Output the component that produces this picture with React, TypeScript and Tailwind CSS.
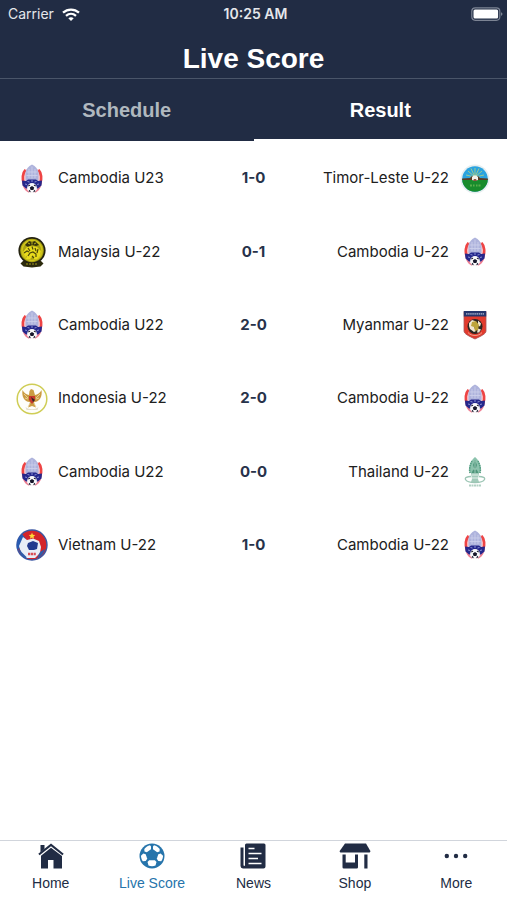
import type { ReactNode } from "react";

type Country =
  | "cambodia"
  | "timorLeste"
  | "malaysia"
  | "myanmar"
  | "indonesia"
  | "thailand"
  | "vietnam";

interface Team {
  name: string;
  country: Country;
}

interface Match {
  home: Team;
  away: Team;
  score: string;
}

const matches: Match[] = [
  {
    home: { name: "Cambodia U23", country: "cambodia" },
    away: { name: "Timor-Leste U-22", country: "timorLeste" },
    score: "1-0",
  },
  {
    home: { name: "Malaysia U-22", country: "malaysia" },
    away: { name: "Cambodia U-22", country: "cambodia" },
    score: "0-1",
  },
  {
    home: { name: "Cambodia U22", country: "cambodia" },
    away: { name: "Myanmar U-22", country: "myanmar" },
    score: "2-0",
  },
  {
    home: { name: "Indonesia U-22", country: "indonesia" },
    away: { name: "Cambodia U-22", country: "cambodia" },
    score: "2-0",
  },
  {
    home: { name: "Cambodia U22", country: "cambodia" },
    away: { name: "Thailand U-22", country: "thailand" },
    score: "0-0",
  },
  {
    home: { name: "Vietnam U-22", country: "vietnam" },
    away: { name: "Cambodia U-22", country: "cambodia" },
    score: "1-0",
  },
];

const crests: Record<Country, ReactNode> = {
  cambodia: (
    <>
      <path d="M9.500 6C5.500 9 5 17 6.500 22c1 4 5 7.800 9.500 7.800s8.500-3.800 9.500-7.800c1.500-5 1-13-3-16z" fill="#f9cdd2" />
      <path d="M9.500 7C6.500 10 6 16 8 21M22.500 7c3 3 3.500 9 1.500 14" fill="none" stroke="#ee4444" strokeWidth="2.600" />
      <path d="M8 23c1 3 3 5 5 5.800M24 23c-1 3-3 5-5 5.800" fill="none" stroke="#ee7f92" strokeWidth="1.800" />
      <path d="M16 1.500l2.500 1.500 2 2 2 4v8l-2.500 3h-8l-2.500-3V9l2-4 2-2z" fill="#aeb3dc" />
      <path d="M16 3.500v12M13 6v9M19 6v9M10.500 9h11M10.500 12.500h11" stroke="#ced2ec" strokeWidth=".8" />
      <path d="M6 17.500l4 .5 2-1.500h8l2 1.500 4-.5-.5 5-3.500 3H10l-3.500-3z" fill="#25288c" />
      <path d="M11.500 18.500l2 .5M18.500 19l2-.5M15 18h2M9 21l2 .5M21 21.500l2-.5" stroke="#8990d4" />
      <circle cx="16" cy="25" r="4.900" fill="#f8f8fa" />
      <path d="M16 23l2.200 1.600-.8 2.500h-2.800l-.8-2.500zM11.500 23.500l1.700-2 1.200 1.200zM20.500 23.500l-1.700-2-1.200 1.200zM12.300 28.300l1.500-1.500 1 2.400zM19.700 28.300l-1.500-1.500-1 2.400z" fill="#17172b" />
    </>
  ),
  timorLeste: (
    <>
      <circle cx="16" cy="16" r="14.500" fill="#e8eff0" />
      <circle cx="16" cy="16" r="12.800" fill="#2ba3df" />
      <path d="M3.200 16h25.600a12.800 12.800 0 0 1-25.600 0z" fill="#188c2c" />
      <path d="M16 14L9 8M16 14L12 5.500M16 14V5M16 14l4-8.500M16 14l7-6M16 14l-9-2M16 14l9-2" stroke="#a8cf83" strokeWidth=".9" />
      <path d="M3.200 15.500L11 15l2-2h6l2 2 7.800.5v1.500H3.200z" fill="#5a3c24" />
      <path d="M13 17v-3l1.500-1.500h3L19 14v3l-3 1z" fill="#f3f2ea" />
      <path d="M15 16h2l1 2h-4z" fill="#8a5642" />
      <path d="M11 22.500h2M14 22.500h1.500M17 22.500h1.500M19.500 22.500h2" stroke="#58ae4c" strokeWidth="2" />
    </>
  ),
  malaysia: (
    <>
      <path d="M7 25h18l2.500 2.500-3 3-8.500 1-8.500-1-3-3z" fill="#2c2a0c" />
      <circle cx="16" cy="14.500" r="13.600" fill="#24220f" />
      <circle cx="16" cy="14.500" r="11.800" fill="#aaa213" />
      <circle cx="16" cy="14.500" r="10" fill="none" stroke="#d0c51b" strokeWidth="1.500" />
      <path d="M9 9l4-4 3 1 3-1 4 4-3 1-4-1-4 2z" fill="#34310d" />
      <path d="M12 7l2 1M16 5.500v3M20 7l-2 1" stroke="#bbb11c" />
      <path d="M7 16l4-5 5-1 5 1 4 4-1 5-3 3h-3l-1-3-3 3h-4l1-3-2 1z" fill="#e8da1c" />
      <path d="M8 17l3-2 2 1M12 12l2 3M16 10.500l1 3M19 12l1 3M22 13l-1 4M12 20l2-3 3-1 3 2v3M16 20l2 2" fill="none" stroke="#4b460b" strokeWidth="1.200" />
      <path d="M10 28h12" stroke="#9f971d" strokeWidth="1.200" strokeDasharray="2 1" />
    </>
  ),
  myanmar: (
    <>
      <path d="M5 2.500h22V22c0 3-5 5-11 8-6-3-11-5-11-8z" fill="#e23b2d" stroke="#a5555b" strokeWidth=".8" />
      <path d="M4.800 2h22.400v5.500H4.800z" fill="#26376d" />
      <path d="M7 4.800h18" stroke="#8e97b8" strokeWidth="1.800" strokeDasharray="1.500 .6" />
      <circle cx="16" cy="17.500" r="7.500" fill="#2c2521" />
      <path d="M10 14l3-3 3 1 2 3-3 3 2 4-2 1-4-3-1-3zM19 11.500l3 3-1 3-2-1zM19 19.500l3 1-2 3h-2z" fill="#f0e5d1" />
      <path d="M13 13l4-1 3 4-1 5-3 1-1-4-3-1z" fill="#bda43b" />
      <path d="M9 23.500c3 4 11 4 14 0" fill="none" stroke="#f1a18c" />
    </>
  ),
  indonesia: (
    <>
      <circle cx="16" cy="16" r="14.800" fill="#fefefa" stroke="#cfcd55" strokeWidth="1.500" />
      <path d="M6.500 7c-1 6 1.500 12 7.500 12l-2 5.500 4-1.500 4 1.500-2-5.500c6 0 8.500-6 7.500-12-1.500 3-4 4.500-6.500 5L17.500 7 15 6l-1.500 2-.5 4C10.500 11.500 8 10 6.500 7z" fill="#cb9c43" />
      <path d="M8 11l4 4M9 15l3 1M24 11l-4 4M23 15l-3 1M14 20l-2 4M18 20l2 4" stroke="#ecd9a8" strokeWidth=".8" />
      <path d="M13 13h6v4l-3 4-3-4z" fill="#c6382e" />
      <path d="M15 14l4 3-2 2z" fill="#2b2825" />
      <path d="M9.500 24c4 3 9 3 13 0l-1 3h-11z" fill="#e6dfca" />
    </>
  ),
  thailand: (
    <>
      <path d="M16 1c-3 2-6 8-6 12l1 4h10l1-4c0-4-3-10-6-12z" fill="#8cc3ad" />
      <path d="M11 17c-1-3 0-8 2-12M21 17c1-3 0-8-2-12" fill="none" stroke="#529c80" strokeWidth="1.500" strokeDasharray="1.500 .7" />
      <path d="M16 4l2 5-1 3 3 6h-8l3-6-1-3z" fill="#4e967b" />
      <path d="M16 5v12M14 13h4" stroke="#bcdccd" strokeWidth=".7" />
      <path d="M12 17h8l-1 6 1 3h-8l1-3z" fill="#a3cbbb" />
      <path d="M13 19h6M13 22h6" stroke="#e5f1ec" />
      <path d="M12 20.500c-4 0-6.500 1.500-5.500 3 2 4 17 4 19 0 1-1.500-1.500-3-5.500-3" fill="none" stroke="#9cc5b4" strokeWidth="1.300" />
      <path d="M10 29.500h12" stroke="#b1d0c3" strokeWidth="2" strokeDasharray="2 .5" />
    </>
  ),
  vietnam: (
    <>
      <circle cx="16" cy="16" r="15" fill="#d3242b" stroke="#3b57a3" strokeWidth="1.400" />
      <path d="M6 5l4 5-3 9-6 1C0 14 2 8 6 5z" fill="#285bb1" />
      <path d="M7 8l4 3 6-1.500 6 2.500 2 6-1 6-5 5H10l-5-5-2-7z" fill="#e8edf7" />
      <path d="M12 14l5-2 5 2-1 6-3 1h-5l-2-4z" fill="#22398f" />
      <path d="M2.500 18l3 5 5 5v2C6 28.500 3 24 2.500 18zM29 20l-5 3-3 6c4-1 7-5 8-9z" fill="#315aa8" />
      <path d="M16 3.500l.9 2.200 2.400.2-1.800 1.500.6 2.300-2.100-1.200-2.100 1.200.6-2.300-1.800-1.500 2.400-.2z" fill="#ffdb38" />
      <path d="M12 25h8" stroke="#d94b54" strokeWidth="2.600" strokeDasharray="2.200 .6" />
    </>
  ),
};

function Crest({ country }: { country: Country }) {
  return (
    <svg viewBox="0 0 32 32" className="size-8 shrink-0" aria-hidden="true">
      {crests[country]}
    </svg>
  );
}

function MatchRow({ match }: { match: Match }) {
  return (
    <li className="grid grid-cols-[1fr_auto_1fr] items-center px-4">
      <div className="flex items-center gap-2.5">
        <Crest country={match.home.country} />
        <span>{match.home.name}</span>
      </div>
      <span className="font-bold text-[#27324a]">{match.score}</span>
      <div className="flex items-center justify-end gap-2.5">
        <span>{match.away.name}</span>
        <Crest country={match.away.country} />
      </div>
    </li>
  );
}

function StatusBar() {
  return (
    <div className="grid h-7 grid-cols-[1fr_auto_1fr] items-center pl-2 pr-1 font-[Inter,sans-serif] text-sm text-gray-200">
      <div className="flex items-center gap-2">
        <span>Carrier</span>
        <svg viewBox="0 0 18 13" className="h-[13px] w-[18px]" fill="none" stroke="white" strokeWidth="2.300" aria-hidden="true">
          <path d="M1 4.600c4.700-4.100 11.300-4.100 16 0M4 7.800c3-2.600 7-2.600 10 0" />
          <path d="M6.300 10.200c1.700-1.400 3.700-1.400 5.400 0L9 13z" fill="white" stroke="none" />
        </svg>
      </div>
      <span className="font-semibold">10:25 AM</span>
      <svg viewBox="0 0 32 15" className="h-[15px] w-8 justify-self-end" aria-hidden="true">
        <rect x=".8" y=".8" width="28" height="12.500" rx="3.500" fill="none" stroke="#7c8494" strokeWidth="1.200" />
        <rect x="2.500" y="2.500" width="24.600" height="9.100" rx="1.500" fill="white" />
        <path d="M30 5.300c2 .6 2 3 0 3.600z" fill="#7c8494" />
      </svg>
    </div>
  );
}

const navItems: { label: string; icon: ReactNode; active?: boolean }[] = [
  {
    label: "Home",
    icon: (
      <>
        <path d="M3.500 2h4v4l-4 3.500z" />
        <path d="M14 .5L1.300 10.800l1.300 1.500L14 3.200l11.400 9.100 1.300-1.500z" />
        <path d="M14 4.700L4 12.700v12.800h7V17h5.500v8.500H25V13z" />
      </>
    ),
  },
  {
    label: "Live Score",
    active: true,
    icon: (
      <>
        <circle cx="14" cy="13" r="12.500" />
        <g fill="white">
          <path d="M13 6.300L8.800 9.300 6.500 8.600 6.300 6C7.700 4 10 2.600 12 2.200l1 1.200z" />
          <path d="M15 6.300l4.200 3 2.300-.7.200-2.600c-1.400-2-3.700-3.400-5.700-3.800l-1 1.200z" />
          <path d="M5.300 10.500l2.400.8 1.500 4.500-1.500 2.200-2.900.2C3.500 16.500 3 14.500 3 12.700z" />
          <path d="M22.700 10.500l-2.400.8-1.500 4.500 1.500 2.200 2.900.2c1.300-1.700 1.800-3.700 1.800-5.500z" />
          <path d="M9.500 19l1.600-1.800h5.800l1.600 1.800-1 3.500c-2.200 1-4.800 1-7 0z" />
        </g>
      </>
    ),
  },
  {
    label: "News",
    icon: (
      <>
        <path d="M1.500 4.500h3V22c0 1.200 1.500 1.200 1.500 0V2A1.500 1.500 0 0 1 7.500.5H25A1.500 1.500 0 0 1 26.500 2v21.500a2 2 0 0 1-2 2H4a2.800 2.800 0 0 1-2.500-3z" />
        <path d="M9.500 5.500h6M9.500 10.500h13M9.500 15.500h9.500M9.500 20.500h13" stroke="white" strokeWidth="1.700" />
      </>
    ),
  },
  {
    label: "Shop",
    icon: (
      <>
        <path d="M4 .5h21l4.500 7.700-.8 1.300H-.7l-.8-1.300z" />
        <path d="M1.500 11.500h3.200v8h9.300v-8h3v12.700a1.300 1.300 0 0 1-1.300 1.300H2.800a1.300 1.300 0 0 1-1.300-1.300zM23.300 11.500h3.200v14h-3.200z" />
      </>
    ),
  },
  {
    label: "More",
    icon: (
      <>
        <circle cx="4.800" cy="13" r="2.200" />
        <circle cx="14" cy="13" r="2.200" />
        <circle cx="23.200" cy="13" r="2.200" />
      </>
    ),
  },
];

export default function App() {
  return (
    <div className="flex min-h-screen flex-col bg-white font-['Liberation_Sans',sans-serif]">
      <header className="bg-[#212c44] text-white">
        <StatusBar />
        <h1 className="flex h-[51px] items-center justify-center border-b border-[#4a5569] pt-3 text-[28px] font-bold">
          Live Score
        </h1>
        <div role="tablist" className="grid h-[62px] grid-cols-2 text-xl font-bold">
          <button role="tab" aria-selected="false" className="text-[#b0b8bf]">
            Schedule
          </button>
          <button role="tab" aria-selected="true" className="border-b-2 border-white pt-0.5">
            Result
          </button>
        </div>
      </header>

      <main className="flex-1 pt-px">
        <ul className="grid min-h-[440px] auto-rows-fr font-[Inter,sans-serif] text-[15px] text-[#202020]">
          {matches.map((match, i) => (
            <MatchRow key={i} match={match} />
          ))}
        </ul>
      </main>

      <nav className="grid h-[60px] grid-cols-5 border-t border-gray-300">
        {navItems.map((item) => (
          <a
            key={item.label}
            href="#"
            aria-current={item.active ? "page" : undefined}
            className={`flex flex-col items-center gap-1 pt-0.5 text-sm ${
              item.active ? "text-[#2674ab]" : "text-[#212c44]"
            }`}
          >
            <svg viewBox="0 0 28 26" className="h-[26px] w-7 overflow-visible" fill="currentColor" aria-hidden="true">
              {item.icon}
            </svg>
            <span>{item.label}</span>
          </a>
        ))}
      </nav>
    </div>
  );
}
